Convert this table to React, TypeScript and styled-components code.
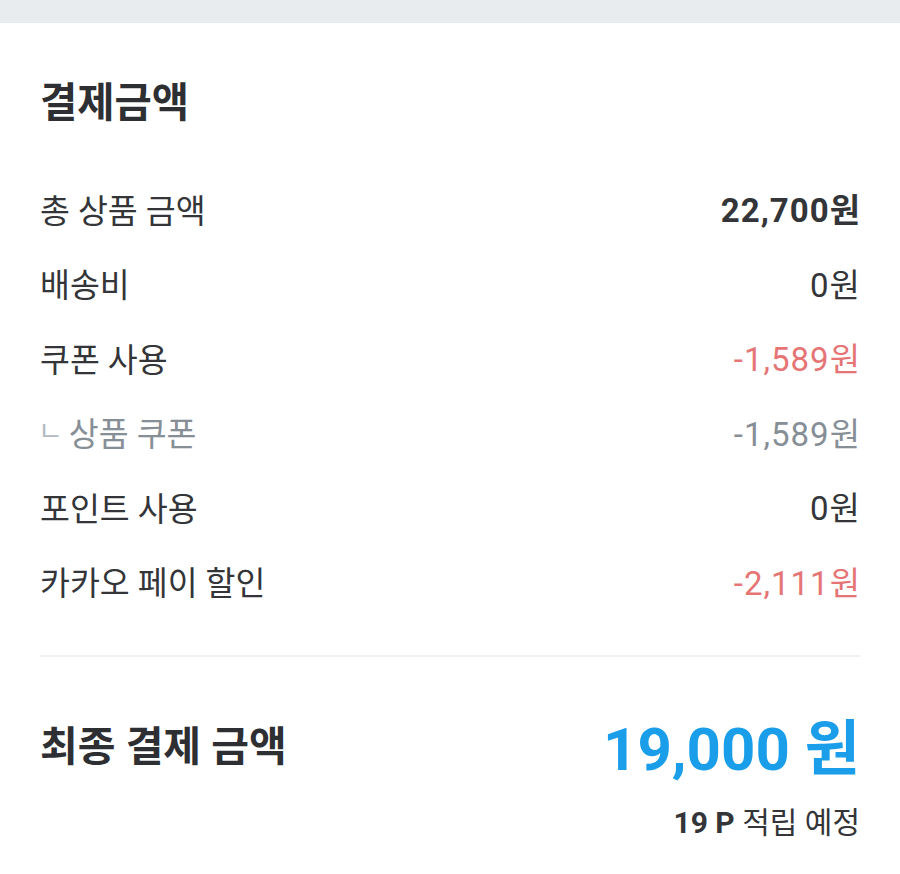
import React from "react"
import styled, { createGlobalStyle } from "styled-components"

const GlobalStyle = createGlobalStyle`
    body {
        margin: 0;
        background: #ffffff;
        font-family: Roboto, "Noto Sans CJK KR", sans-serif;
        color: #333538;
    }
`

const TopBar = styled.div({
    height: "23px",
    backgroundColor: "#e9ecef"
})

const Section = styled.section({
    padding: "54px 40px 0",
    display: "flex",
    flexDirection: "column"
})

const Title = styled.h2({
    margin: 0,
    fontSize: "40.5px",
    lineHeight: "52px",
    fontWeight: 700,
    color: "#2d2f33",
    marginBottom: "42px"
})

const List = styled.div({
    display: "flex",
    flexDirection: "column"
})

type Tone = "default" | "discount" | "muted"

const toneColor: Record<Tone, string> = {
    default: "#333538",
    discount: "#e57575",
    muted: "#868e96"
}

const Row = styled.div({
    display: "flex",
    justifyContent: "space-between",
    alignItems: "center",
    height: "74.5px"
})

const Label = styled.span<{ $tone: Tone }>(({ $tone }) => ({
    display: "flex",
    alignItems: "center",
    fontSize: "32.5px",
    color: $tone === "muted" ? toneColor.muted : "#333538"
}))

const SubMark = styled.span({
    fontSize: "27px",
    color: "#b4bac0",
    marginLeft: "-2px",
    marginRight: "6px",
    marginTop: "-4px"
})

const Value = styled.span<{ $tone: Tone, $bold?: boolean }>(({ $tone, $bold }) => ({
    fontSize: "33px",
    letterSpacing: "1px",
    marginRight: "-1px",
    color: toneColor[$tone],
    fontWeight: $bold ? 700 : 400
}))

const Divider = styled.hr({
    margin: "37px 0 0",
    border: "none",
    height: "2px",
    backgroundColor: "#eef0f2"
})

const TotalRow = styled.div({
    display: "flex",
    justifyContent: "space-between",
    alignItems: "center",
    height: "80px",
    marginTop: "46px"
})

const TotalLabel = styled.span({
    fontSize: "41px",
    fontWeight: 700,
    color: "#2d2f33"
})

const TotalValue = styled.span({
    fontSize: "60px",
    fontWeight: 700,
    color: "#1a9ee9"
})

const PointLine = styled.div({
    alignSelf: "flex-end",
    marginTop: "20px",
    lineHeight: "40px",
    fontSize: "30px",
    color: "#333538",
    "& b": {
        fontWeight: 700
    }
})

const rows: { label: string, value: string, tone: Tone, bold?: boolean, sub?: boolean }[] = [
    { label: "총 상품 금액", value: "22,700원", tone: "default", bold: true },
    { label: "배송비", value: "0원", tone: "default" },
    { label: "쿠폰 사용", value: "-1,589원", tone: "discount" },
    { label: "상품 쿠폰", value: "-1,589원", tone: "muted", sub: true },
    { label: "포인트 사용", value: "0원", tone: "default" },
    { label: "카카오 페이 할인", value: "-2,111원", tone: "discount" }
]

const App: React.FC = () => {
    return (
        <>
            <GlobalStyle />
            <TopBar />
            <Section>
                <Title>결제금액</Title>
                <List>
                    {
                        rows.map((row, index) =>
                            <Row key={index}>
                                <Label $tone={row.sub ? "muted" : "default"}>
                                    {row.sub && <SubMark>ㄴ</SubMark>}
                                    {row.label}
                                </Label>
                                <Value $tone={row.tone} $bold={row.bold}>{row.value}</Value>
                            </Row>
                        )
                    }
                </List>
                <Divider />
                <TotalRow>
                    <TotalLabel>최종 결제 금액</TotalLabel>
                    <TotalValue>19,000 원</TotalValue>
                </TotalRow>
                <PointLine><b>19 P</b> 적립 예정</PointLine>
            </Section>
        </>
    )
}

export default App
